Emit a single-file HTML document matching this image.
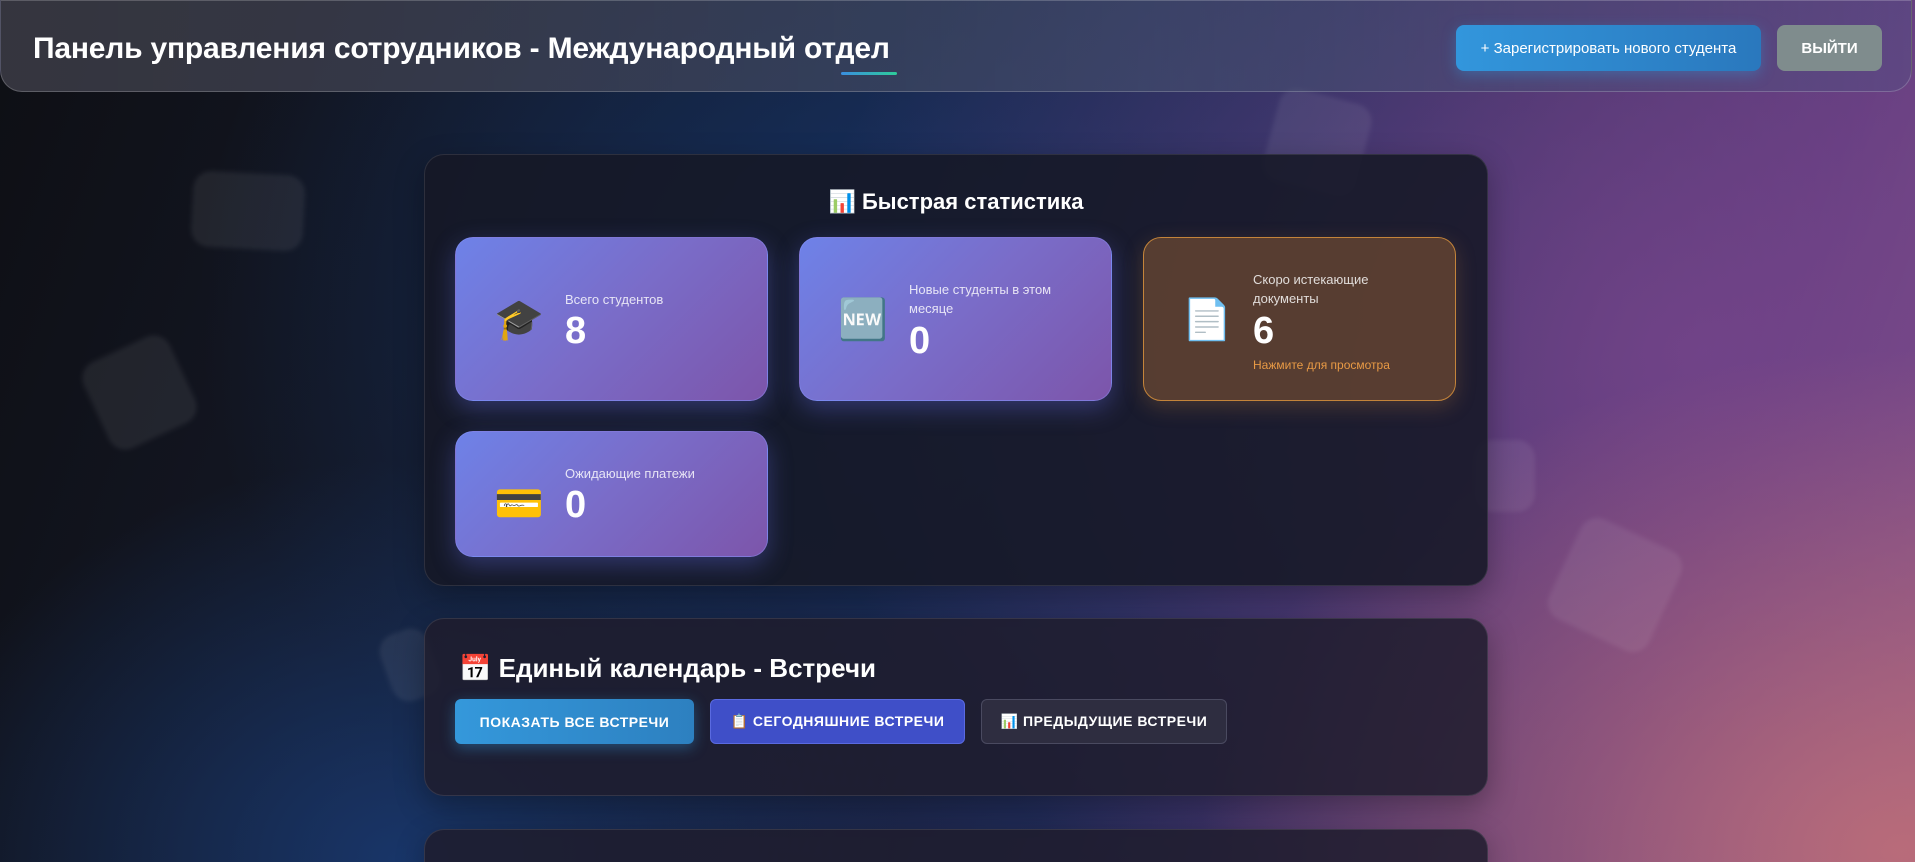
<!DOCTYPE html>
<html><head><meta charset="utf-8"><style>
*{box-sizing:border-box;margin:0;padding:0}
html{width:1915px;height:862px;overflow:hidden}
body{width:1915px;height:862px;overflow:hidden;font-family:"Liberation Sans",sans-serif;color:#fff;
background:
radial-gradient(ellipse 700px 500px at 1900px 850px,rgba(190,110,120,.9),transparent),
radial-gradient(ellipse 900px 700px at 1700px 350px,rgba(120,70,140,.8),transparent),
radial-gradient(ellipse 700px 600px at 900px 300px,rgba(20,50,100,.9),transparent),
radial-gradient(ellipse 500px 400px at 400px 860px,rgba(25,60,120,.8),transparent),
linear-gradient(110deg,#0e0f14 0%,#161b2c 35%,#222a55 60%,#5a3a7a 85%,#8a5a88 100%);position:relative}
.sq{position:absolute;background:rgba(255,255,255,.07);border-radius:18px;filter:blur(2px)}
header{position:absolute;left:0;top:0;width:1912px;height:92px;border-radius:0 0 22px 22px;background:linear-gradient(90deg,rgba(60,60,70,.85),rgba(70,80,110,.6) 60%,rgba(80,80,130,.4));border:1px solid rgba(255,255,255,.2)}
header h1{position:absolute;left:32px;top:31px;font-size:30px;font-weight:bold;letter-spacing:-.2px}
.ul{position:absolute;left:840px;top:71px;width:56px;height:3px;background:linear-gradient(90deg,#3a8ee0,#2ecc9a);border-radius:2px}
.reg{position:absolute;left:1455px;top:24px;width:305px;height:46px;border-radius:8px;background:linear-gradient(90deg,#3296dc,#2a78bd);font-size:15px;display:flex;align-items:center;justify-content:center;box-shadow:0 4px 14px rgba(50,150,220,.4)}
.out{position:absolute;left:1776px;top:24px;width:105px;height:46px;border-radius:8px;background:#7f8c8d;font-size:15px;font-weight:bold;display:flex;align-items:center;justify-content:center}
.panel{position:absolute;left:424px;width:1064px;border-radius:20px;background:rgba(22,24,38,.88);border:1px solid rgba(255,255,255,.1);box-shadow:0 10px 30px rgba(0,0,0,.3)}
.card{position:absolute;width:313px;border-radius:18px;background:linear-gradient(135deg,#6e82e8,#7a6cc8 50%,#7c55aa);box-shadow:0 8px 24px rgba(100,110,230,.35);border:1px solid rgba(140,150,255,.4)}
.card.o{background:rgba(120,80,50,.65);border:1.5px solid #c4843a;box-shadow:0 6px 20px rgba(200,130,60,.25)}
.ic{position:absolute;left:38px;font-size:40px;line-height:1}
.lb{position:absolute;left:109px;font-size:13px;color:rgba(255,255,255,.82);line-height:19px}
.num{position:absolute;left:109px;font-size:38px;font-weight:bold}
.btn{position:absolute;top:699px;height:45px;border-radius:6px;font-size:14px;font-weight:bold;display:flex;align-items:center;justify-content:center;letter-spacing:.5px}
</style></head><body>
<div class="sq" style="left:192px;top:173px;width:112px;height:76px;transform:rotate(3deg)"></div>
<div class="sq" style="left:92px;top:345px;width:95px;height:95px;transform:rotate(-25deg)"></div>
<div class="sq" style="left:1270px;top:95px;width:95px;height:95px;transform:rotate(15deg)"></div>
<div class="sq" style="left:1475px;top:440px;width:60px;height:72px"></div>
<div class="sq" style="left:1560px;top:530px;width:110px;height:110px;transform:rotate(25deg)"></div>
<div class="sq" style="left:385px;top:630px;width:50px;height:70px;transform:rotate(-20deg)"></div>
<header><h1>Панель управления сотрудников - Международный отдел</h1><div class="ul"></div>
<div class="reg">+ Зарегистрировать нового студента</div><div class="out">ВЫЙТИ</div></header>

<div class="panel" style="top:154px;height:432px">
<div style="position:absolute;left:0;right:0;top:34px;text-align:center;font-size:22px;font-weight:bold">📊 Быстрая статистика</div>
</div>
<div class="card" style="left:455px;top:237px;height:164px"><div class="ic" style="top:62px">🎓</div><div class="lb" style="top:52px">Всего студентов</div><div class="num" style="top:72px">8</div></div>
<div class="card" style="left:799px;top:237px;height:164px"><div class="ic" style="top:62px">🆕</div><div class="lb" style="top:42px">Новые студенты в этом<br>месяце</div><div class="num" style="top:82px">0</div></div>
<div class="card o" style="left:1143px;top:237px;height:164px"><div class="ic" style="top:62px">📄</div><div class="lb" style="top:32px">Скоро истекающие<br>документы</div><div class="num" style="top:72px">6</div><div class="lb" style="top:118px;color:#e89a45;font-size:12px">Нажмите для просмотра</div></div>
<div class="card" style="left:455px;top:431px;height:126px"><div class="ic" style="top:52px">💳</div><div class="lb" style="top:32px">Ожидающие платежи</div><div class="num" style="top:52px">0</div></div>

<div class="panel" style="top:618px;height:178px;background:rgba(30,28,45,.85)">
<div style="position:absolute;left:34px;top:34px;font-size:26px;font-weight:bold">📅 Единый календарь - Встречи</div></div>
<div class="btn" style="left:455px;width:239px;background:linear-gradient(90deg,#3498db,#2d80c0);box-shadow:0 4px 14px rgba(52,152,219,.4)">ПОКАЗАТЬ ВСЕ ВСТРЕЧИ</div>
<div class="btn" style="left:710px;width:255px;background:#3f4fc8;border:1px solid #5a6ae0">📋 СЕГОДНЯШНИЕ ВСТРЕЧИ</div>
<div class="btn" style="left:981px;width:246px;background:#2e2d40;border:1px solid #4a4a60">📊 ПРЕДЫДУЩИЕ ВСТРЕЧИ</div>

<div class="panel" style="top:829px;height:33px;border-radius:20px 20px 0 0;border-bottom:none;background:rgba(30,28,45,.85)"></div>
</body></html>
